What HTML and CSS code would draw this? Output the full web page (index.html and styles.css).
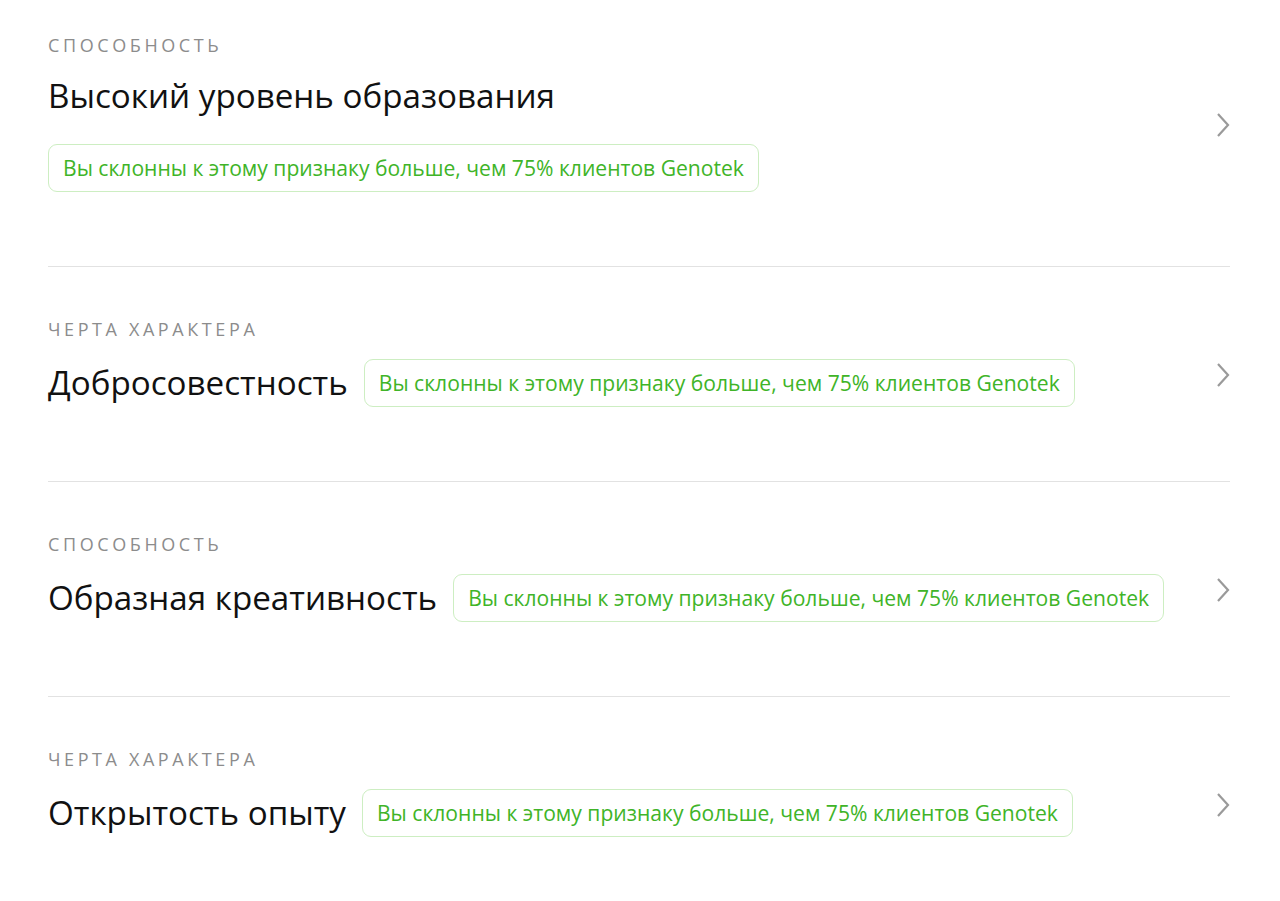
FILE: index.html
```html
<!DOCTYPE html>
<html lang="ru">

<head>
    <meta charset="UTF-8">
    <meta name="viewport" content="width=device-width, initial-scale=1.0">
    <title>Черты</title>
    <link rel="stylesheet" href="styles.css">
</head>

<body>
    <div class="list">
        <div class="trait trait-first">
            <div class="trait-body">
                <div class="trait-kind">Способность</div>
                <div class="trait-line trait-line-wrap">
                    <div class="trait-name">Высокий уровень образования</div>
                    <div class="badge">Вы склонны к этому признаку больше, чем 75% клиентов Genotek</div>
                </div>
            </div>
            <svg class="chevron" viewBox="0 0 14 26"><path d="M2 2 L12 13 L2 24" /></svg>
        </div>

        <div class="trait">
            <div class="trait-body">
                <div class="trait-kind">Черта характера</div>
                <div class="trait-line">
                    <div class="trait-name">Добросовестность</div>
                    <div class="badge">Вы склонны к этому признаку больше, чем 75% клиентов Genotek</div>
                </div>
            </div>
            <svg class="chevron" viewBox="0 0 14 26"><path d="M2 2 L12 13 L2 24" /></svg>
        </div>

        <div class="trait">
            <div class="trait-body">
                <div class="trait-kind">Способность</div>
                <div class="trait-line">
                    <div class="trait-name">Образная креативность</div>
                    <div class="badge">Вы склонны к этому признаку больше, чем 75% клиентов Genotek</div>
                </div>
            </div>
            <svg class="chevron" viewBox="0 0 14 26"><path d="M2 2 L12 13 L2 24" /></svg>
        </div>

        <div class="trait">
            <div class="trait-body">
                <div class="trait-kind">Черта характера</div>
                <div class="trait-line">
                    <div class="trait-name">Открытость опыту</div>
                    <div class="badge">Вы склонны к этому признаку больше, чем 75% клиентов Genotek</div>
                </div>
            </div>
            <svg class="chevron" viewBox="0 0 14 26"><path d="M2 2 L12 13 L2 24" /></svg>
        </div>
    </div>
</body>

</html>
```

FILE: styles.css
```css
body {
    font-family: "Open Sans", Arial, sans-serif;
    margin: 0;
    background-color: #ffffff;
    color: #111111;
}

.list {
    padding: 0 50px 0 48px;
}

.trait {
    display: flex;
    align-items: center;
    border-bottom: 1px solid #e2e2e2;
    padding: 50px 0 74px;
}

.trait-first {
    padding-top: 33px;
}

.trait:last-child {
    border-bottom: none;
}

.trait-body {
    flex: 1;
}

.trait-kind {
    font-size: 18px;
    line-height: 24px;
    letter-spacing: 3.6px;
    text-transform: uppercase;
    color: #8c8c8c;
}

.trait-line {
    display: flex;
    align-items: center;
    gap: 16px;
    margin-top: 18px;
}

.trait-line-wrap {
    flex-direction: column;
    align-items: flex-start;
    gap: 24px;
    margin-top: 15px;
}

.trait-name {
    font-size: 33.2px;
    line-height: 48px;
}

.badge {
    font-size: 21.1px;
    line-height: 46px;
    padding: 0 14px;
    border: 1px solid #cdeec2;
    border-radius: 9px;
    color: #40b428;
    white-space: nowrap;
}

.chevron {
    width: 14px;
    height: 26px;
    fill: none;
    stroke: #9a9a9a;
    stroke-width: 2.2;
    margin-top: 25px;
}
```
